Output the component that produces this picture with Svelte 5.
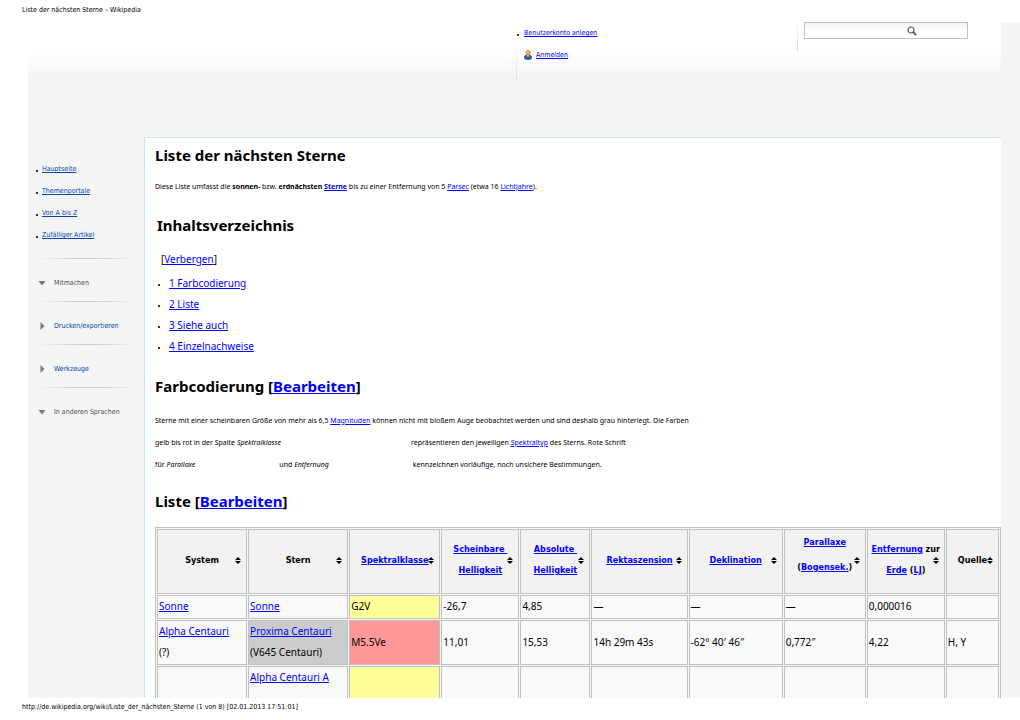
<script lang="ts">
    const navLinks = ['Hauptseite', 'Themenportale', 'Von A bis Z', 'Zufälliger Artikel'];

    const portals = [
        { label: 'Mitmachen', open: true },
        { label: 'Drucken/exportieren', open: false },
        { label: 'Werkzeuge', open: false },
        { label: 'In anderen Sprachen', open: true },
    ];

    const toc = ['1 Farbcodierung', '2 Liste', '3 Siehe auch', '4 Einzelnachweise'];

    const colWidths = [90, 100, 91, 78, 70, 96, 94, 82, 78, 53];

    const stars = [
        {
            system: 'Sonne', note: '', star: 'Sonne', alias: '', cls: 'G2V', tone: 'yellow', dim: false,
            values: ['-26,7', '4,85', '—', '—', '—', '0,000016', ''],
        },
        {
            system: 'Alpha Centauri', note: '(?)', star: 'Proxima Centauri', alias: '(V645 Centauri)', cls: 'M5.5Ve', tone: 'red', dim: true,
            values: ['11,01', '15,53', '14h 29m 43s', '-62° 40′ 46″', '0,772″', '4,22', 'H, Y'],
        },
        {
            system: '', note: '', star: 'Alpha Centauri A', alias: '', cls: '', tone: 'yellow', dim: false,
            values: ['', '', '', '', '', '', ''],
        },
    ];
</script>

{#snippet sorter()}
    <button class="sort" aria-label="Sortieren">
        <svg viewBox="0 0 6 7" width="6" height="7"><path d="M3 0L6 3H0zM0 4H6L3 7z" /></svg>
    </button>
{/snippet}

<div class="page">
    <div class="running-head">Liste der nächsten Sterne – Wikipedia</div>

    <div class="sheet">
        <header class="top">
            <div class="personal">
                <ul>
                    <li class="dot"><a href="#konto">Benutzerkonto anlegen</a></li>
                    <li>
                        <svg class="user" viewBox="0 0 8 10" width="8" height="10">
                            <path d="M0 7.6C0 5.4 1.6 4.8 4 4.8s4 .6 4 2.8C8 9.4 6.6 10 4 10S0 9.4 0 7.6z" fill="#2f5f93" />
                            <path d="M3 5h2L4 7.5z" fill="#dce8f2" />
                            <circle cx="4" cy="2.7" r="2.6" fill="#d9973a" />
                            <circle cx="3.5" cy="2.2" r="1.3" fill="#efbd6c" />
                        </svg>
                        <a href="#anmelden">Anmelden</a>
                    </li>
                </ul>
            </div>
            <div class="search">
                <div class="search-box">
                    <input type="search" aria-label="Suche" />
                    <button class="go" aria-label="Suchen">
                        <svg viewBox="0 0 10 10" width="10" height="10">
                            <circle cx="4" cy="4" r="3" fill="none" stroke="#555" stroke-width="1.2" />
                            <path d="M6.2 6.2L9 9" stroke="#555" stroke-width="1.8" />
                        </svg>
                    </button>
                </div>
            </div>
        </header>

        <nav class="sidebar">
            <ul class="nav-links">
                {#each navLinks as link}
                    <li class="dot"><a href="#nav">{link}</a></li>
                {/each}
            </ul>
            {#each portals as portal}
                <div class="portal">
                    <button class:closed={!portal.open} aria-expanded={portal.open}>
                        <svg viewBox="0 0 8 8" width="8" height="8">
                            {#if portal.open}
                                <path d="M.5 2H7.5L4 6.5z" />
                            {:else}
                                <path d="M2.5 0V8L6.5 4z" />
                            {/if}
                        </svg>
                        {portal.label}
                    </button>
                </div>
            {/each}
        </nav>

        <main class="content">
            <h1>Liste der nächsten Sterne</h1>
            <p>
                Diese Liste umfasst die <b>sonnen-</b> bzw. <b>erdnächsten <a href="#stern">Sterne</a></b> bis zu einer
                Entfernung von 5 <a href="#parsec">Parsec</a> (etwa 16 <a href="#lj">Lichtjahre</a>).
            </p>

            <section class="toc">
                <h2>Inhaltsverzeichnis</h2>
                <div class="toggle">[<a href="#toc">Verbergen</a>]</div>
                <ul>
                    {#each toc as entry}
                        <li class="dot"><a href="#toc">{entry}</a></li>
                    {/each}
                </ul>
            </section>

            <h2>Farbcodierung [<a href="#edit">Bearbeiten</a>]</h2>
            <p>
                Sterne mit einer scheinbaren Größe von mehr als 6,5 <a href="#mag">Magnituden</a> können nicht mit bloßem
                Auge beobachtet werden und sind deshalb grau hinterlegt. Die Farben<br />
                gelb bis rot in der Spalte <i class="swatch-wide">Spektralklasse</i>repräsentieren den jeweiligen
                <a href="#typ">Spektraltyp</a> des Sterns. Rote Schrift<br />
                für <i class="swatch">Parallaxe</i>und <i class="swatch">Entfernung</i>kennzeichnen vorläufige, noch
                unsichere Bestimmungen.
            </p>

            <h2 class="list-title">Liste [<a href="#edit">Bearbeiten</a>]</h2>
            <table>
                <colgroup>
                    {#each colWidths as width}
                        <col style="width: {width}px" />
                    {/each}
                </colgroup>
                <thead>
                    <tr>
                        <th><div class="head"><span>System</span>{@render sorter()}</div></th>
                        <th><div class="head"><span>Stern</span>{@render sorter()}</div></th>
                        <th><div class="head"><span><a href="#s">Spektralklasse</a></span>{@render sorter()}</div></th>
                        <th><div class="head"><span><a href="#s">Scheinbare&nbsp;<br />Helligkeit</a></span>{@render sorter()}</div></th>
                        <th><div class="head"><span><a href="#s">Absolute&nbsp;<br />Helligkeit</a></span>{@render sorter()}</div></th>
                        <th><div class="head"><span><a href="#s">Rektaszension</a></span>{@render sorter()}</div></th>
                        <th><div class="head"><span><a href="#s">Deklination</a></span>{@render sorter()}</div></th>
                        <th><div class="head"><span class="raised"><a href="#s">Parallaxe</a><br />(<a href="#s">Bogensek.</a>)</span>{@render sorter()}</div></th>
                        <th><div class="head"><span><a href="#s">Entfernung</a> zur<br /><a href="#s">Erde</a> (<a href="#s">LJ</a>)</span>{@render sorter()}</div></th>
                        <th><div class="head"><span>Quelle</span>{@render sorter()}</div></th>
                    </tr>
                </thead>
                <tbody>
                    {#each stars as row}
                        <tr>
                            <td>
                                {#if row.system}<a href="#system">{row.system}</a>{/if}
                                {#if row.note}<br />{row.note}{/if}
                            </td>
                            <td class:dim={row.dim}>
                                <a href="#star">{row.star}</a>
                                {#if row.alias}<br />{row.alias}{/if}
                            </td>
                            <td class={row.tone}>{row.cls}</td>
                            {#each row.values as value}
                                <td>{value}</td>
                            {/each}
                        </tr>
                    {/each}
                </tbody>
            </table>
        </main>
    </div>

    <div class="running-foot">http://de.wikipedia.org/wiki/Liste_der_nächsten_Sterne (1 von 8) [02.01.2013 17:51:01]</div>
</div>

<style>
    :global(body) {
        margin: 0;
        background: #fff;
    }

    .page {
        display: flex;
        flex-direction: column;
        height: 100vh;
        overflow: hidden;
        font-family: Tahoma, 'DejaVu Sans Condensed', 'DejaVu Sans', sans-serif;
        font-size: 7px;
        color: #000;
    }

    .running-head,
    .running-foot {
        flex: none;
        height: 22px;
        padding-left: 22px;
        line-height: 20px;
        box-sizing: border-box;
    }

    .running-foot {
        line-height: 18px;
    }

    .sheet {
        flex: 1;
        min-height: 0;
        margin-left: 28px;
        padding-right: 19px;
        overflow: hidden;
        background: #f5f5f5;
        display: grid;
        grid-template-columns: 116px minmax(0, 1fr);
        grid-template-rows: 115px auto;
    }

    a {
        color: #00f;
        text-decoration: underline;
    }

    ul {
        list-style: none;
        margin: 0;
        padding: 0;
    }

    button {
        border: 0;
        padding: 0;
        background: none;
        font: inherit;
    }

    svg {
        display: block;
    }

    .dot::before {
        content: '';
        width: 2px;
        height: 2px;
        margin-top: 3px;
        flex: none;
        background: #333;
    }

    .top {
        grid-column: 1 / -1;
        display: grid;
        grid-template-columns: 488fr 281fr 204fr;
        background: linear-gradient(#fff 28px, #f5f5f5 56px);
    }

    .personal {
        grid-column: 2;
        height: 58px;
        background: linear-gradient(transparent 40%, #cfe6f5) left / 1px 100% no-repeat;
    }

    .personal li {
        display: flex;
        align-items: center;
        height: 22px;
        padding-left: 8px;
        gap: 4px;
    }

    .personal li.dot {
        padding-left: 1px;
        gap: 5px;
    }

    .search {
        height: 29px;
        padding-left: 7px;
        background: linear-gradient(#fff, #b9def5) left / 1px 100% no-repeat;
    }

    .search-box {
        display: flex;
        align-items: center;
        height: 17px;
        width: 83%;
        box-sizing: border-box;
        border: 1px solid #c0c0c0;
        background: linear-gradient(#f4f4f4, #fff 60%);
    }

    .search-box input {
        width: 63%;
        height: 13px;
        box-sizing: border-box;
        border: 0;
        padding: 0 4px;
        background: none;
        outline: none;
        font: inherit;
    }

    .sidebar {
        padding: 21px 8px 0;
    }

    .nav-links {
        margin-bottom: 12px;
    }

    .nav-links li {
        display: flex;
        align-items: center;
        gap: 4px;
        line-height: 22px;
    }

    .nav-links a {
        color: #0645ad;
    }

    .portal {
        height: 43px;
        margin-left: 2px;
        background: linear-gradient(90deg, #f5f5f5, #ccc 40%, #ccc 60%, #f5f5f5) top / 100% 1px no-repeat;
    }

    .portal button {
        display: flex;
        align-items: center;
        gap: 8px;
        padding-top: 14px;
        line-height: 22px;
        color: #4d4d4d;
        fill: #797979;
    }

    .portal button.closed {
        color: #0645ad;
    }

    .content {
        padding-left: 10px;
        border-top: 1px solid #cfe6f5;
        border-left: 1px solid #c3e3f7;
        background: #fff;
        font-family: Tahoma, 'Noto Sans', sans-serif;
    }

    h1,
    h2 {
        margin: 0;
        font-size: 15px;
        line-height: 22px;
        font-weight: bold;
    }

    h1 {
        padding-top: 6px;
    }

    p {
        margin: 0;
        line-height: 22px;
    }

    h1 + p {
        margin-top: 10px;
    }

    h2 + p {
        margin-top: 13px;
    }

    .toc {
        margin: 16px 0 18px;
        padding-left: 2px;
        font-size: 10px;
        line-height: 21px;
    }

    .toc .toggle {
        margin: 13px 0 3px 4px;
    }

    .toc li {
        display: flex;
        align-items: center;
        gap: 9px;
        padding-left: 1px;
    }

    .swatch-wide {
        margin-right: 130px;
    }

    .swatch {
        margin-right: 84px;
    }

    .list-title {
        margin: 14px 0 15px;
    }

    table {
        width: 100%;
        table-layout: fixed;
        border: 1px solid #c0c0c0;
        border-collapse: separate;
        border-spacing: 1px;
        background: #f9f9f9;
        font-size: 10px;
        line-height: 21px;
    }

    th,
    td {
        box-sizing: border-box;
        border: 1px solid #c0c0c0;
        padding: 0 0 1px 1px;
        text-align: left;
        white-space: nowrap;
    }

    th {
        height: 65px;
        padding: 0 0 3px;
        background: #f2f2f2;
        font-family: Tahoma, 'DejaVu Sans Condensed', 'DejaVu Sans', sans-serif;
        font-size: 9px;
    }

    td {
        background: #f9f9f9;
    }

    tbody tr:last-child td {
        height: 46px;
        vertical-align: top;
    }

    .head {
        display: grid;
        grid-template-columns: 11px minmax(0, 1fr) 11px;
        align-items: center;
        text-align: center;
    }

    .head span {
        grid-column: 2;
        justify-self: center;
    }

    .head .raised {
        line-height: 25px;
        padding-bottom: 10px;
    }

    .dim {
        background: #ccc;
    }

    .yellow {
        background: #ff9;
    }

    .red {
        background: #f99;
    }
</style>
